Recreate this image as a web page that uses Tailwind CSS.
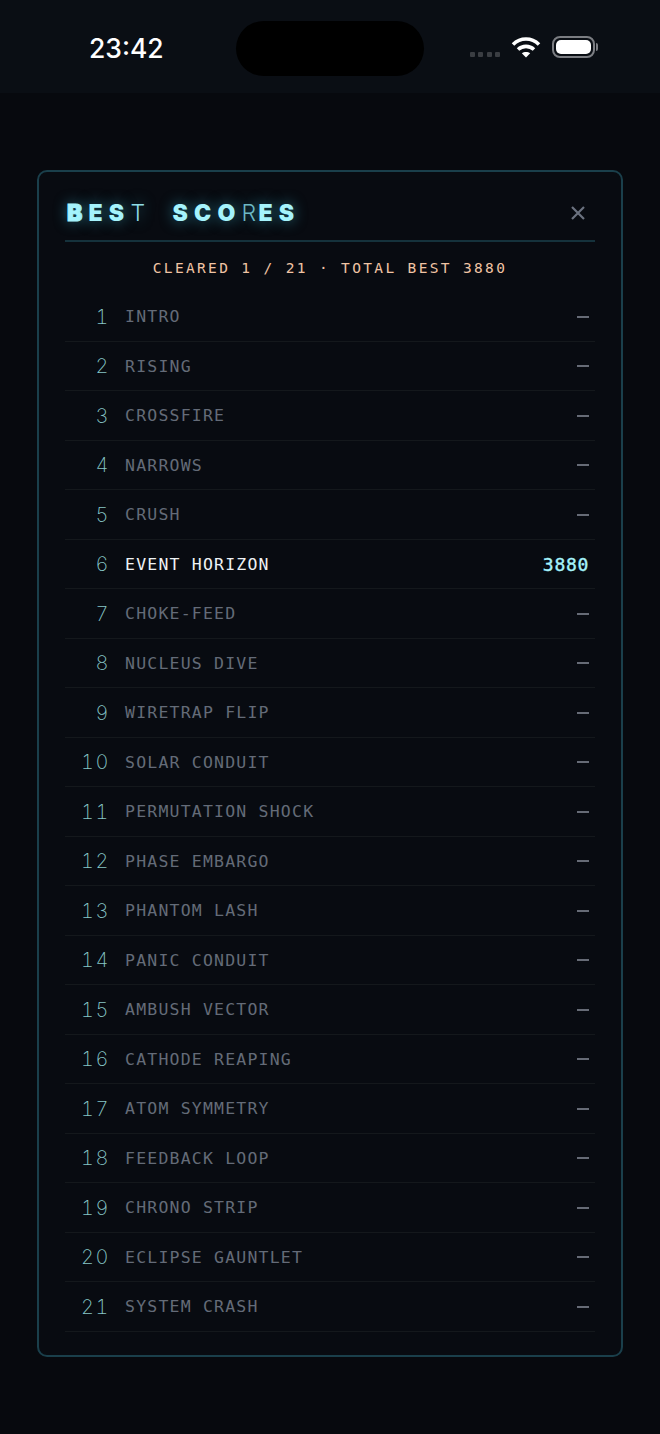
<!DOCTYPE html>
<html lang="en">
    <head>
        <meta charset="UTF-8">
        <meta name="viewport" content="width=device-width, initial-scale=1.0">
        <title>Best Scores</title>
        <script src="https://cdn.jsdelivr.net/npm/@tailwindcss/browser@4"></script>
    </head>
    <body class="bg-[#07090e] h-[1434px] w-[660px] overflow-hidden font-['DejaVu_Sans_Mono',monospace]">

        <!-- Status bar -->
        <header class="h-[93px] bg-[#0a0e14] relative flex items-center justify-between pl-[89px] pr-[62px] pt-[3px]">
            <span class="font-['Inter',sans-serif] font-medium text-[26.5px] leading-none text-white">23:42</span>
            <div class="absolute left-[236px] top-[21px] w-[188px] h-[55px] rounded-[28px] bg-black"></div>
            <div class="flex items-center -mt-[2px]">
                <div class="flex gap-[3.5px] mt-[15px] mr-[11px]">
                    <i class="w-[5px] h-[5px] rounded-[1px] bg-[#3a3d42]"></i>
                    <i class="w-[5px] h-[5px] rounded-[1px] bg-[#3a3d42]"></i>
                    <i class="w-[5px] h-[5px] rounded-[1px] bg-[#3a3d42]"></i>
                    <i class="w-[5px] h-[5px] rounded-[1px] bg-[#3a3d42]"></i>
                </div>
                <svg width="30" height="22" viewBox="0 0 30 22" fill="none" stroke="white" stroke-width="3.6" class="mr-[11px]">
                    <path d="M2 8.5 C9.5 1.2 20.5 1.2 28 8.5"/>
                    <path d="M7 13.5 C11.5 9.3 18.5 9.3 23 13.5"/>
                    <path d="M15 21.5 L10.8 17.3 C13 15.5 17 15.5 19.2 17.3 Z" fill="white" stroke="none"/>
                </svg>
                <div class="flex items-center">
                    <div class="w-[43px] h-[22px] rounded-[8px] border-[2px] border-[#7b7d82] p-[2px]">
                        <div class="w-full h-full rounded-[5px] bg-white"></div>
                    </div>
                    <div class="w-[2px] h-[8px] ml-[1px] rounded-r-[2px] bg-[#7b7d82]"></div>
                </div>
            </div>
        </header>

        <main class="pt-[77px] px-[37px]">
            <section class="h-[1187px] rounded-[10px] border-2 border-[#1a3f4b] bg-[#080b11] pt-[26px] px-[26px]">
                <div class="h-[44px] border-b-2 border-[#15323c] flex items-start justify-between pl-[2px] pr-[10px]">
                    <h1 class="font-['Inter',sans-serif] font-black text-[23px] leading-[30px] tracking-[6.2px] text-[#a5f3fc] [text-shadow:0_0_14px_rgba(64,200,230,0.55)] whitespace-pre"><span class="[-webkit-text-stroke:1px_#a5f3fc]">B</span>ES<span class="inline-block w-[20.6px] font-light text-[#8fdce6] tracking-normal">T</span>  SCO<span class="inline-block w-[17px] font-light text-[#6fb9c4] tracking-normal">R</span>ES</h1>
                    <svg width="14" height="14" viewBox="0 0 14 14" stroke="#6b7280" stroke-width="2.2" class="mt-[8px]">
                        <path d="M1 1 L13 13 M13 1 L1 13"/>
                    </svg>
                </div>
                <p class="h-[50px] pt-[4px] flex items-center justify-center text-[14.5px] tracking-[2.35px] text-[#f0c4a4] whitespace-pre">CLEARED 1 / 21 · TOTAL BEST 3880</p>
                <ul id="scores"></ul>
            </section>
        </main>

        <script>
        const LEVELS = ['INTRO', 'RISING', 'CROSSFIRE', 'NARROWS', 'CRUSH', 'EVENT HORIZON', 'CHOKE-FEED', 'NUCLEUS DIVE', 'WIRETRAP FLIP', 'SOLAR CONDUIT', 'PERMUTATION SHOCK', 'PHASE EMBARGO', 'PHANTOM LASH', 'PANIC CONDUIT', 'AMBUSH VECTOR', 'CATHODE REAPING', 'ATOM SYMMETRY', 'FEEDBACK LOOP', 'CHRONO STRIP', 'ECLIPSE GAUNTLET', 'SYSTEM CRASH'];

        document.getElementById('scores').innerHTML = LEVELS.map((name, i) => {
            const best = i === 5;
            return `<li class="h-[49.5px] border-b border-[#14181c] flex items-center pr-[6px]">
                <span class="w-[45px] pt-[1px] text-right font-['Inter',sans-serif] font-extralight tabular-nums text-[20px] tracking-[1.6px] text-[#86c6c6]">${i + 1}</span>
                <span class="ml-[15px] pt-[3px] flex-1 text-[16.5px] tracking-[1.2px] ${best ? 'text-[#eef2f5]' : 'text-[#646b78]'}">${name}</span>
                ${best
                    ? '<span class="pt-[1px] text-[18px] tracking-[0.7px] [-webkit-text-stroke:0.4px_#a5f3fc] text-[#a5f3fc]">3880</span>'
                    : '<span class="w-[12px] h-[2px] mt-[1px] bg-[#666b76]"></span>'}
            </li>`;
        }).join('');
        </script>
    </body>
</html>
